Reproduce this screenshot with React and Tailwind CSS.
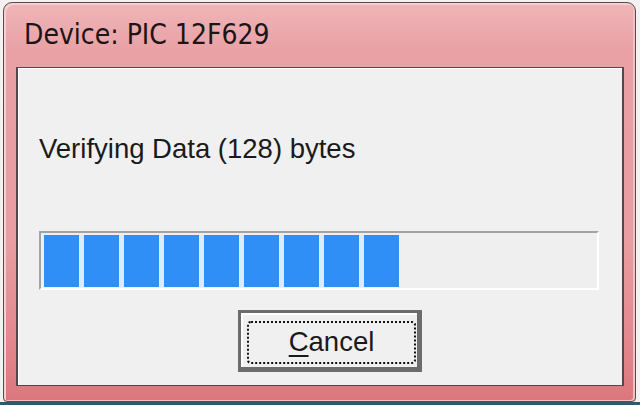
const sans = { fontFamily: '"Liberation Sans", Arial, sans-serif' };

const filled = 9;

export default function App() {
  return (
    <div className="w-[640px] h-[405px] bg-[#f4f1f1] flex flex-col overflow-hidden">
      {/* Window frame */}
      <div className="mt-[2px] ml-[3px] mr-[4px] h-[400px] rounded-t-[9px] rounded-b-[4px] border border-[#5e4a4c] bg-[linear-gradient(180deg,#efb5b8_0%,#e9a1a5_12%,#e89ea2_60%,#e2858b_88%,#dc767c_100%)] shadow-[inset_2px_2px_0_#f6cfd2,inset_-2px_-1px_0_#f1c0c4] flex flex-col">
        {/* Title */}
        <div className="h-[64px] pt-[18px] pl-[20px]">
          <span
            className="text-[28px] leading-none text-[#1c1416]"
            style={{ fontFamily: '"Liberation Sans Narrow", "DejaVu Sans Condensed", "Liberation Sans", sans-serif' }}
          >
            Device: PIC 12F629
          </span>
        </div>

        {/* Client area */}
        <div className="flex-1 ml-[12px] mr-[11px] mb-[15px] border-2 border-[#55464a] border-t border-b bg-[#f0f0f0] shadow-[inset_1px_1px_0_#ffffff]">
          <div className="pl-[21px] pt-[67px] flex flex-col" style={sans}>
            <div className="text-[27.5px] leading-none text-[#1a1a1a]">Verifying Data (128) bytes</div>

            {/* Progress */}
            <div className="mt-[68px] w-[560px] h-[59px] border-2 border-t-[#a3a3a3] border-l-[#a3a3a3] border-r-white border-b-white bg-[#efefef] pt-[2px] pl-[3px]">
              <div className="flex gap-[5px] w-fit bg-[#dcebfb]">
                {Array.from({ length: filled }).map((_, i) => (
                  <div key={i} className="w-[35px] h-[52px] bg-[#2f8ff6]" />
                ))}
              </div>
            </div>

            {/* Cancel button */}
            <div className="mt-[20px] ml-[199px] w-[184px] h-[62px] border-[3px] border-r-[5px] border-b-[5px] border-[#6c6c6c] bg-[#f0f0f0] shadow-[inset_2px_2px_0_#ffffff] pt-[8px] pl-[6px] pr-[1px] pb-[3px]">
              <div className="h-full rounded-[4px] border-2 border-dotted border-[#111111] flex items-center justify-center">
                <span className="text-[27.5px] leading-none text-[#1a1a1a]">
                  <span className="underline underline-offset-[4px]">C</span>ancel
                </span>
              </div>
            </div>
          </div>
        </div>
      </div>
      <div className="flex-1 bg-[#2c5c6c]" />
    </div>
  );
}
